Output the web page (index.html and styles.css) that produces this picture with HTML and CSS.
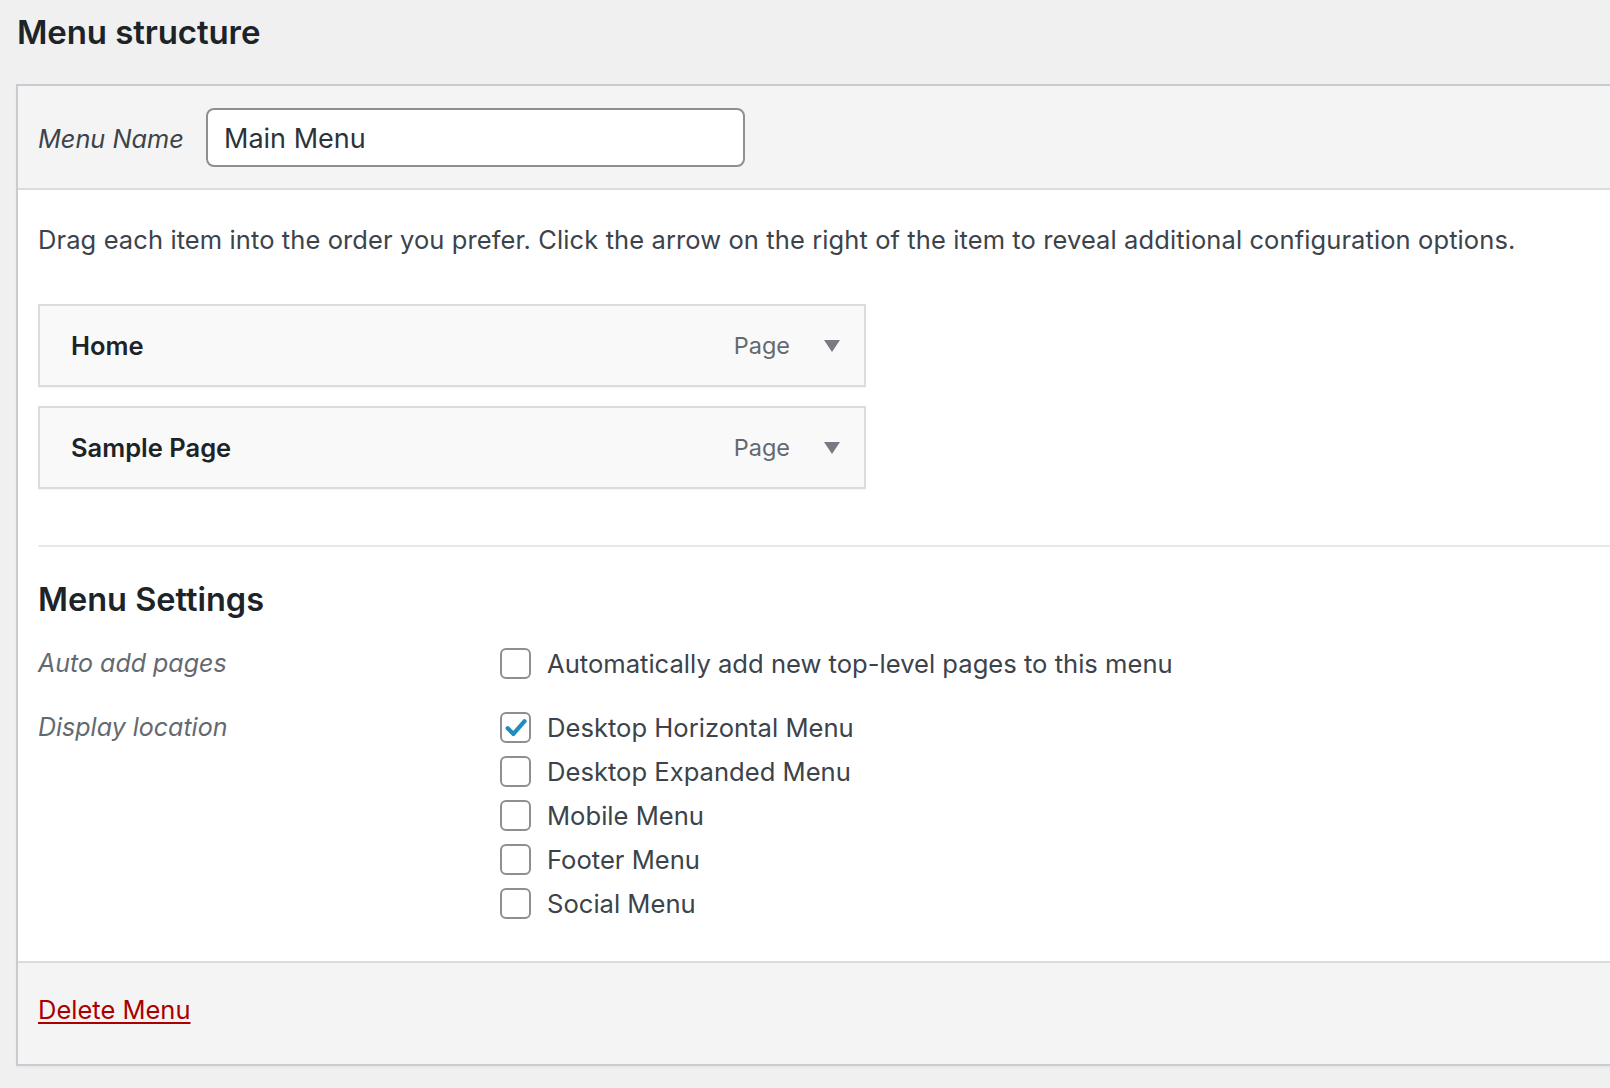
FILE: index.html
```html
<!DOCTYPE html>
<html lang="en">
<head>
<meta charset="utf-8">
<title>Menu structure</title>
<link rel="stylesheet" href="styles.css">
</head>
<body>
<div class="page">
  <h2 class="page-title">Menu structure</h2>
  <div class="panel">
    <div class="panel-header">
      <label class="name-label" for="menu-name">Menu Name</label>
      <input class="name-input" id="menu-name" type="text" value="Main Menu">
    </div>
    <div class="panel-body">
      <p class="drag-hint">Drag each item into the order you prefer. Click the arrow on the right of the item to reveal additional configuration options.</p>
      <ul class="menu-items">
        <li class="menu-item">
          <span class="item-title">Home</span>
          <span class="item-type">Page</span>
          <span class="item-arrow"></span>
        </li>
        <li class="menu-item">
          <span class="item-title">Sample Page</span>
          <span class="item-type">Page</span>
          <span class="item-arrow"></span>
        </li>
      </ul>
      <div class="settings">
        <h3 class="settings-title">Menu Settings</h3>
        <div class="settings-row auto-row">
          <div class="row-label">Auto add pages</div>
          <div class="row-options">
            <label class="option"><span class="box"></span><span>Automatically add new top-level pages to this menu</span></label>
          </div>
        </div>
        <div class="settings-row">
          <div class="row-label">Display location</div>
          <div class="row-options">
            <label class="option"><span class="box checked"><svg viewBox="0 0 20 20" width="26" height="26"><path d="M3.6 10.2 L8 14.6 L16.6 4.8" fill="none" stroke="#1e8cbe" stroke-width="3.2" stroke-linecap="round" stroke-linejoin="round"/></svg></span><span>Desktop Horizontal Menu</span></label>
            <label class="option"><span class="box"></span><span>Desktop Expanded Menu</span></label>
            <label class="option"><span class="box"></span><span>Mobile Menu</span></label>
            <label class="option"><span class="box"></span><span>Footer Menu</span></label>
            <label class="option"><span class="box"></span><span>Social Menu</span></label>
          </div>
        </div>
      </div>
    </div>
    <div class="panel-footer">
      <a class="delete-link" href="#">Delete Menu</a>
    </div>
  </div>
</div>
</body>
</html>
```
FILE: styles.css
```css
html, body {
  margin: 0;
  padding: 0;
}
body {
  background: #f0f0f1;
  font-family: Inter, "Noto Sans", sans-serif;
  color: #3c434a;
  overflow: hidden;
  width: 1610px;
  height: 1088px;
}
.page {
  padding-left: 16px;
}
.page-title {
  margin: 0;
  padding: 9px 0 0 1px;
  height: 84px;
  box-sizing: border-box;
  font-size: 33px;
  line-height: 46px;
  font-weight: 600;
  color: #1d2327;
  letter-spacing: -0.1px;
}
.panel {
  width: 1640px;
  border: 2px solid #c8ccd0;
  box-shadow: 0 2px 2px rgba(0,0,0,0.04);
  background: #fff;
}
.panel-header {
  height: 102px;
  background: #f4f4f4;
  border-bottom: 2px solid #dcdcde;
  display: flex;
  align-items: center;
  padding-left: 20px;
}
.name-label {
  font-style: italic;
  font-size: 25.3px;
  color: #3c434a;
  width: 168px;
  padding-top: 2px;
}
.name-input {
  width: 539px;
  height: 59px;
  box-sizing: border-box;
  border: 2px solid #8c8f94;
  border-radius: 8px;
  padding: 3px 16px 0 16px;
  font-family: Inter, "Noto Sans", sans-serif;
  font-size: 27px;
  color: #2c3338;
  background: #fff;
  outline: none;
}
.panel-body {
  padding: 0 0 0 20px;
  height: 771px;
  box-sizing: border-box;
}
.drag-hint {
  margin: 0;
  padding-top: 32px;
  font-size: 25.5px;
  letter-spacing: 0.1px;
  line-height: 36px;
  color: #3c434a;
}
.menu-items {
  list-style: none;
  margin: 46px 0 0 0;
  padding: 0;
  width: 828px;
}
.menu-item {
  height: 83px;
  box-sizing: border-box;
  border: 2px solid #dcdcde;
  background: #f9f9f9;
  box-shadow: 0 1px 1px rgba(0,0,0,0.04);
  display: flex;
  align-items: center;
  padding: 0 24px 0 31px;
  margin-bottom: 19px;
}
.item-title {
  flex: 1;
  font-size: 25.5px;
  font-weight: 600;
  color: #1d2327;
}
.item-type {
  font-size: 23.5px;
  color: #646970;
  margin-right: 34px;
}
.item-arrow {
  width: 0;
  height: 0;
  border-left: 8px solid transparent;
  border-right: 8px solid transparent;
  border-top: 12px solid #787c82;
}
.settings {
  margin-top: 56px;
  border-top: 2px solid #e8e8e8;
}
.settings-title {
  margin: 0;
  padding-top: 33px;
  font-size: 32.5px;
  line-height: 40px;
  font-weight: 600;
  color: #1d2327;
}
.settings-row {
  display: flex;
  align-items: flex-start;
}
.auto-row {
  margin-top: 28px;
  margin-bottom: 33px;
}
.row-label {
  width: 462px;
  font-style: italic;
  font-size: 25px;
  line-height: 31px;
  color: #646970;
}
.row-options {
  display: flex;
  flex-direction: column;
  gap: 13px;
}
.option {
  display: flex;
  align-items: center;
  gap: 16px;
  font-size: 25.6px;
  line-height: 31px;
  color: #3c434a;
}
.box {
  width: 31px;
  height: 31px;
  box-sizing: border-box;
  border: 2px solid #8c8f94;
  border-radius: 6px;
  background: #fff;
  display: flex;
  align-items: center;
  justify-content: center;
  flex: none;
}
.panel-footer {
  height: 103px;
  box-sizing: border-box;
  background: #f4f4f4;
  border-top: 2px solid #dcdcde;
  display: flex;
  align-items: center;
  padding: 0 0 8px 20px;
}
.delete-link {
  font-size: 25.5px;
  color: #a00;
  text-decoration: underline;
  text-underline-offset: 3px;
  text-decoration-thickness: 2px;
}
```
